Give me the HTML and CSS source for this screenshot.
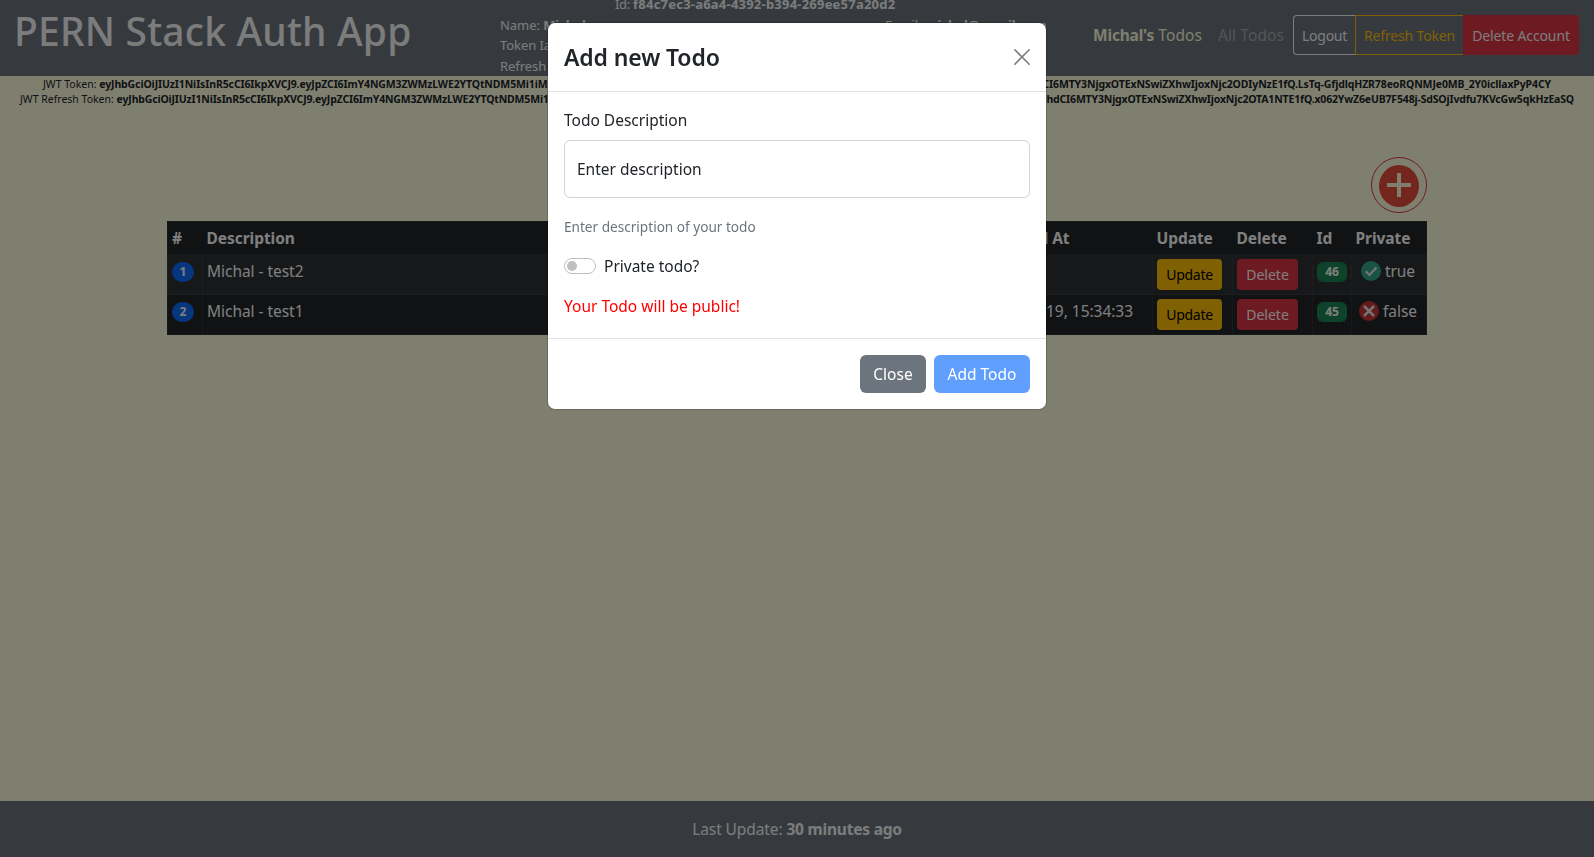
FILE: index.html
```
<!DOCTYPE html>
<html lang="en">
<head>
<meta charset="utf-8">
<title>PERN Stack Auth App</title>
<link rel="stylesheet" href="styles.css">
</head>
<body>
<div class="page">
  <header class="navbar">
    <h1 class="brand">PERN Stack Auth App</h1>
    <div class="user-info">
      <div class="user-id"><span>Id: </span><b>f84c7ec3-a6a4-4392-b394-269ee57a20d2</b></div>
      <div class="user-row"><span>Name: <b>Michal</b></span><span class="email">Email: <b>michal@gmail.com</b></span></div>
      <div class="user-row">Token Iat:</div>
      <div class="user-row">Refresh Token Iat:</div>
    </div>
    <nav class="nav">
      <a class="nav-link active"><b>Michal's</b> Todos</a>
      <a class="nav-link">All Todos</a>
      <div class="btn-group">
        <button class="nav-btn logout">Logout</button>
        <button class="nav-btn refresh">Refresh Token</button>
        <button class="nav-btn remove">Delete Account</button>
      </div>
    </nav>
  </header>

  <section class="tokens">
    <div class="token first"><span>JWT Token: <b>eyJhbGciOiJIUzI1NiIsInR5cCI6IkpXVCJ9.eyJpZCI6ImY4NGM3ZWMzLWE2YTQtNDM5Mi1iMzk0</b></span><b>YXQiOCI6MTY3NjgxOTExNSwiZXhwIjoxNjc2ODIyNzE1fQ.LsTq-GfjdlqHZR78eoRQNMJe0MB_2Y0icllaxPyP4CY</b></div>
    <div class="token second"><span>JWT Refresh Token: <b>eyJhbGciOiJIUzI1NiIsInR5cCI6IkpXVCJ9.eyJpZCI6ImY4NGM3ZWMzLWE2YTQtNDM5Mi1iMzk0</b></span><b>ImlhdCI6MTY3NjgxOTExNSwiZXhwIjoxNjc2OTA1NTE1fQ.x062YwZ6eUB7F548j-SdSOjIvdfu7KVcGw5qkHzEaSQ</b></div>
  </section>

  <main class="content">
    <div class="toolbar">
      <button class="add-btn">
        <svg width="40" height="42" viewBox="0 0 40 42"><ellipse cx="20" cy="21" rx="20" ry="21" fill="#e64c3c"/><path d="M20 8v24M8 20h24" stroke="#ffffe0" stroke-width="4"/></svg>
      </button>
    </div>
    <table class="todos">
      <colgroup><col class="c-num"><col><col class="c-date"><col class="c-action"><col class="c-action"><col class="c-id"><col class="c-private"></colgroup>
      <thead><tr><th>#</th><th>Description</th><th class="date-head">Updated At</th><th>Update</th><th>Delete</th><th>Id</th><th>Private</th></tr></thead>
      <tbody>
        <tr class="odd">
          <td><span class="badge num">1</span></td><td>Michal - test2</td><td></td>
          <td><button class="btn-sm update">Update</button></td><td><button class="btn-sm delete">Delete</button></td>
          <td><span class="badge id">46</span></td>
          <td><div class="private"><svg width="20" height="20" viewBox="0 0 20 20"><circle cx="10" cy="10" r="10" fill="#32a68a"/><path d="M4.8 10.2l3.7 3.8 7-7.4" fill="none" stroke="#e8e8e8" stroke-width="2.2"/></svg>true</div></td>
        </tr>
        <tr>
          <td><span class="badge num">2</span></td><td>Michal - test1</td><td class="date">2023-02-19, 15:34:33</td>
          <td><button class="btn-sm update">Update</button></td><td><button class="btn-sm delete">Delete</button></td>
          <td><span class="badge id">45</span></td>
          <td><div class="private"><svg width="20" height="20" viewBox="0 0 20 20"><circle cx="10" cy="10" r="10" fill="#c83434"/><path d="M5 5l10 10M15 5L5 15" fill="none" stroke="#e8e8e8" stroke-width="2.5"/></svg>false</div></td>
        </tr>
      </tbody>
    </table>
  </main>

  <footer class="footer"><span>Last Update: <b>30 minutes ago</b></span></footer>
</div>

<div class="backdrop">
  <div class="modal">
    <div class="modal-header">
      <h2 class="modal-title">Add new Todo</h2>
      <svg class="close" width="16" height="16" viewBox="0 0 16 16"><path d="M.8.8l14.4 14.4M15.2.8L.8 15.2" stroke="#000" stroke-width="1.6" stroke-linecap="round"/></svg>
    </div>
    <div class="modal-body">
      <div class="label">Todo Description</div>
      <div class="input">Enter description</div>
      <div class="hint">Enter description of your todo</div>
      <div class="switch-row"><span class="switch"></span><span>Private todo?</span></div>
      <div class="warning">Your Todo will be public!</div>
    </div>
    <div class="modal-footer">
      <button class="btn secondary">Close</button>
      <button class="btn primary">Add Todo</button>
    </div>
  </div>
</div>
</body>
</html>
```
FILE: styles.css
```
* { box-sizing: border-box; }
body {
  margin: 0;
  font-family: "Noto Sans", sans-serif;
  font-size: 15.5px;
  line-height: 24px;
  color: #212529;
  overflow: hidden;
}
button { font-family: inherit; margin: 0; }
.page {
  display: flex;
  flex-direction: column;
  height: 857px;
  background: #ffffe0;
}

/* Top bar */
.navbar {
  display: flex;
  align-items: flex-start;
  height: 76px;
  padding: 0 15px 0 14px;
  background: #6c757d;
  overflow: hidden;
  flex: none;
}
.brand {
  width: 486px;
  margin: 7px 0 0;
  font-size: 39px;
  line-height: 48px;
  font-weight: 500;
  letter-spacing: 0.2px;
  color: #f8f9fa;
}
.user-info {
  width: 520px;
  margin-top: -6px;
  font-size: 13px;
  line-height: 20.5px;
  color: #f8f9fa;
}
.user-id { padding-left: 115px; letter-spacing: 0.22px; }
.user-id span { letter-spacing: -0.3px; }
.user-row { display: flex; letter-spacing: -0.06px; white-space: pre; }
.email { margin-left: auto; width: 135px; }
.nav {
  display: flex;
  align-items: center;
  gap: 16px;
  margin: 15px 0 0 auto;
  height: 40px;
  white-space: nowrap;
}
.nav-link { color: rgba(255, 255, 255, 0.4); letter-spacing: 0.09px; }
.nav-link.active { color: #ffffe0; }
.nav-link.active b { letter-spacing: -0.2px; }
.btn-group { display: flex; margin-left: -7px; }
.nav-btn {
  height: 40px;
  padding: 0 8px;
  font-size: 14px;
  letter-spacing: -0.12px;
  background: transparent;
  border: 1px solid #f8f9fa;
  color: #f8f9fa;
}
.logout { width: 62px; border-radius: 4px 0 0 4px; border-right: 0; letter-spacing: -0.26px; }
.refresh { width: 108px; border-color: #ffc107; color: #ffc107; border-right: 0; letter-spacing: -0.16px; }
.remove { width: 116px; background: #dc3545; border-color: #dc3545; border-radius: 0 4px 4px 0; }

/* JWT strings */
.tokens { padding-top: 1px; font-size: 10.5px; line-height: 15px; }
.token { display: flex; justify-content: space-between; white-space: nowrap; }
.token b { letter-spacing: -0.118px; }
.first { padding: 0 43px 0 43px; }
.second { padding: 0 20px 0 20px; }
.second b { letter-spacing: -0.165px; }

/* Todo list */
.content { flex: 1; width: 1260px; margin: 0 auto; padding-top: 50px; }
.toolbar { display: flex; justify-content: flex-end; height: 64px; }
.add-btn {
  width: 56px;
  height: 56px;
  padding: 2px 0 0;
  display: flex;
  align-items: center;
  justify-content: center;
  border: 1px solid #dc3545;
  border-radius: 50%;
  background: transparent;
}
.todos {
  width: 1260px;
  table-layout: fixed;
  border-collapse: collapse;
  background: #212529;
  color: #fff;
}
.c-num { width: 35px; }
.c-date { width: 180px; }
.c-action { width: 80px; }
.c-id { width: 39px; }
.c-private { width: 75px; }
.todos th {
  height: 33px;
  padding: 4px;
  line-height: 23px;
  text-align: left;
  letter-spacing: -0.05px;
  border-bottom: 1px solid #2c3034;
}
.todos .date-head { text-align: right; padding-right: 83px; }
.todos td {
  height: 40px;
  padding: 4px;
  vertical-align: top;
  border: 1px solid #2c3034;
  letter-spacing: -0.04px;
}
.todos { border: 1px solid #2c3034; }
.odd { background: #2c3034; }
.odd td { border-color: #373b3e; }
.todos .date { text-align: right; padding-right: 19px; letter-spacing: -0.04px; white-space: nowrap; }
.badge {
  display: flex;
  align-items: center;
  justify-content: center;
  height: 20px;
  margin-top: 3px;
  font-size: 12px;
  font-weight: 700;
  color: #fff;
}
.num { width: 22px; border-radius: 10px; background: #0d6efd; }
.id { width: 30px; border-radius: 6px; background: #198754; }
.btn-sm {
  display: block;
  height: 31px;
  padding: 0;
  border: 0;
  border-radius: 4px;
  font-size: 14px;
}
.update { width: 65px; background: #ffc107; color: #000; letter-spacing: -0.29px; }
.delete { width: 61px; background: #dc3545; color: #fff; }
.private { display: flex; justify-content: center; align-items: center; gap: 4px; padding-right: 2px; }

.footer {
  display: flex;
  align-items: center;
  justify-content: center;
  height: 56px;
  background: #6c757d;
  color: #f8f9fa;
  letter-spacing: -0.1px;
}
.footer b { letter-spacing: -0.2px; }

/* Modal */
.backdrop {
  position: fixed;
  inset: 0;
  display: flex;
  justify-content: center;
  align-items: flex-start;
  padding-top: 22px;
  background: rgba(0, 0, 0, 0.5);
}
.modal {
  width: 500px;
  background: #fff;
  background-clip: padding-box;
  border: 1px solid rgba(0, 0, 0, 0.175);
  border-radius: 8px;
}
.modal-header {
  display: flex;
  align-items: center;
  justify-content: space-between;
  height: 69px;
  padding: 0 16px;
  border-bottom: 1px solid #dee2e6;
}
.modal-title {
  margin: 0;
  font-size: 23px;
  line-height: 36px;
  font-weight: 600;
  letter-spacing: -0.12px;
}
.close { opacity: 0.5; }
.modal-body { padding: 16px 16px 20px; }
.input {
  height: 58px;
  margin: 8px 0 17px;
  padding: 16px 12px;
  border: 1px solid #ced4da;
  border-radius: 6px;
}
.hint { font-size: 13.6px; color: #6c757d; }
.switch-row { display: flex; align-items: center; gap: 8px; margin: 15px 0 16px; }
.switch {
  display: flex;
  align-items: center;
  width: 32px;
  height: 16px;
  padding-left: 2px;
  border: 1px solid #bfbfbf;
  border-radius: 8px;
}
.switch::before {
  content: "";
  width: 10px;
  height: 10px;
  border-radius: 50%;
  background: #bfbfbf;
}
.warning { color: #f00; }
.modal-footer {
  display: flex;
  justify-content: flex-end;
  gap: 8px;
  padding: 16px;
  border-top: 1px solid #dee2e6;
}
.btn {
  height: 38px;
  padding: 0;
  border: 0;
  border-radius: 6px;
  font-size: 15.5px;
  color: #fff;
}
.secondary { width: 66px; background: #6c757d; }
.primary { width: 96px; background: #619fff; }
```
